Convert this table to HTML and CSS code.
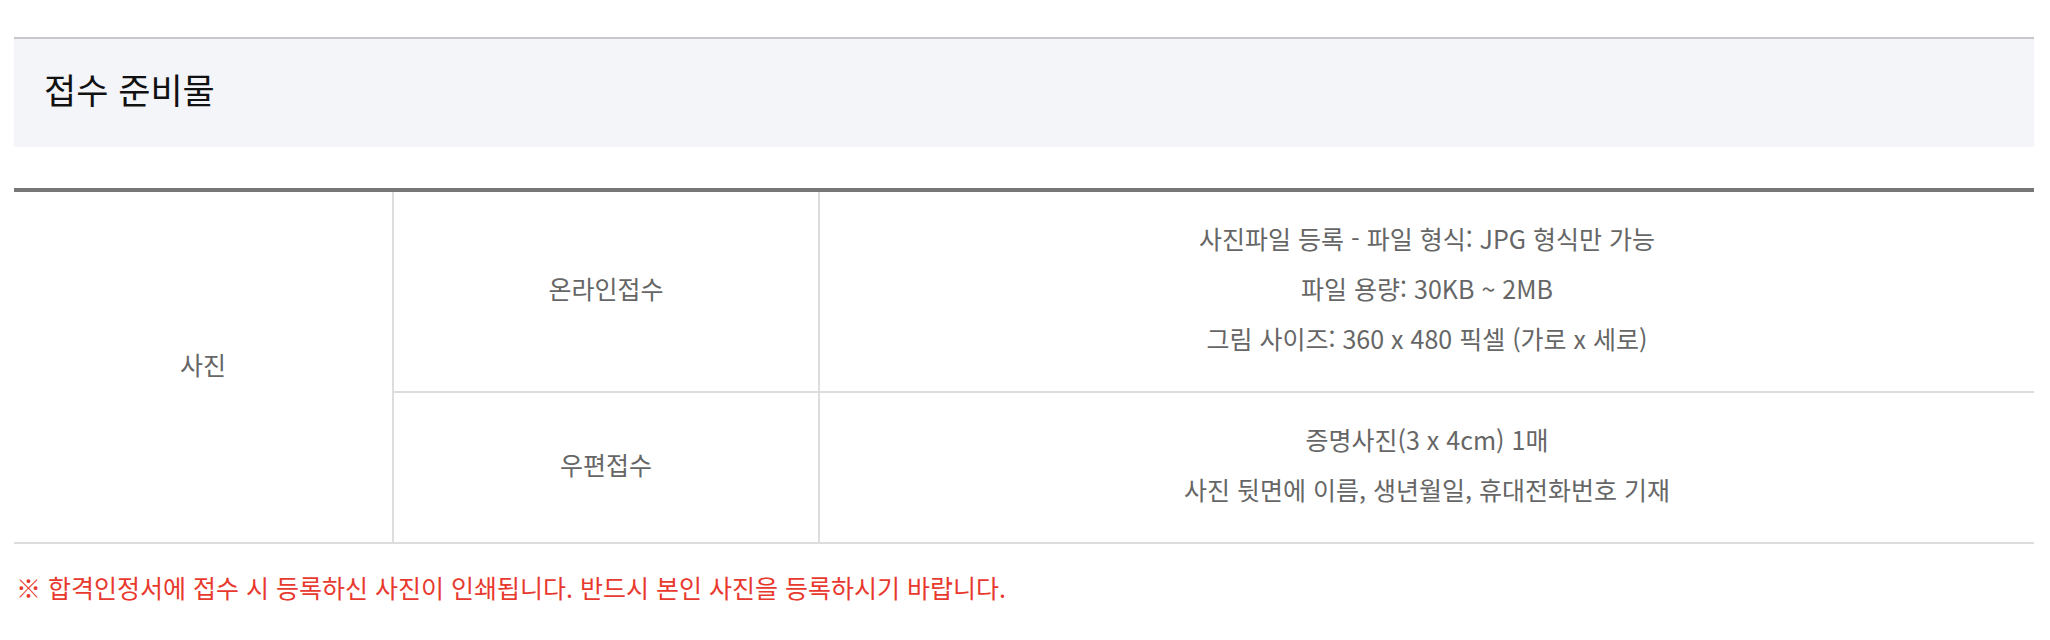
FILE: index.html
```html
<!DOCTYPE html>
<html lang="ko">
<head>
<meta charset="utf-8">
<title>접수 준비물</title>
<link rel="stylesheet" href="styles.css">
</head>
<body>
<div class="page">
  <div class="section-head">
    <h2 class="section-title">접수 준비물</h2>
  </div>
  <table class="prep-table">
    <colgroup>
      <col class="col-kind">
      <col class="col-method">
      <col class="col-detail">
    </colgroup>
    <tbody>
      <tr>
        <td class="cell cell-kind" rowspan="2">사진</td>
        <td class="cell cell-method">온라인접수</td>
        <td class="cell cell-detail">
          <p class="line">사진파일 등록 - 파일 형식: JPG 형식만 가능</p>
          <p class="line">파일 용량: 30KB ~ 2MB</p>
          <p class="line">그림 사이즈: 360 x 480 픽셀 (가로 x 세로)</p>
        </td>
      </tr>
      <tr>
        <td class="cell cell-method">우편접수</td>
        <td class="cell cell-detail">
          <p class="line">증명사진(3 x 4cm) 1매</p>
          <p class="line">사진 뒷면에 이름, 생년월일, 휴대전화번호 기재</p>
        </td>
      </tr>
    </tbody>
  </table>
  <p class="notice">※ 합격인정서에 접수 시 등록하신 사진이 인쇄됩니다. 반드시 본인 사진을 등록하시기 바랍니다.</p>
</div>
</body>
</html>
```

FILE: styles.css
```css
html, body {
  margin: 0;
  padding: 0;
  background: #ffffff;
}

body {
  font-family: "Noto Sans CJK KR", "Noto Sans", sans-serif;
  color: #666666;
}

.page {
  margin: 0 16px 0 14px;
  padding-top: 37px;
}

.section-head {
  border-top: 2px solid #c7c8cc;
  background: #f4f5f9;
  padding: 25px 30px 33px;
}

.section-title {
  margin: 0;
  font-size: 35px;
  line-height: 50px;
  font-weight: 400;
  color: #111111;
}

.prep-table {
  width: 100%;
  margin-top: 41px;
  border-collapse: separate;
  border-spacing: 0;
  border-top: 4px solid #777777;
  table-layout: fixed;
}

.col-kind { width: 380px; }
.col-method { width: 426px; }

.cell {
  padding: 21px 0 28px;
  text-align: center;
  vertical-align: middle;
  font-size: 25px;
  line-height: 50px;
  color: #666666;
  border-bottom: 2px solid #dddddd;
}

.cell-kind,
.cell-method {
  border-right: 2px solid #dddddd;
}

.line {
  margin: 0;
}

.notice {
  margin: 25px 0 0 2px;
  font-size: 25px;
  line-height: 36px;
  color: #e8392e;
}
```
